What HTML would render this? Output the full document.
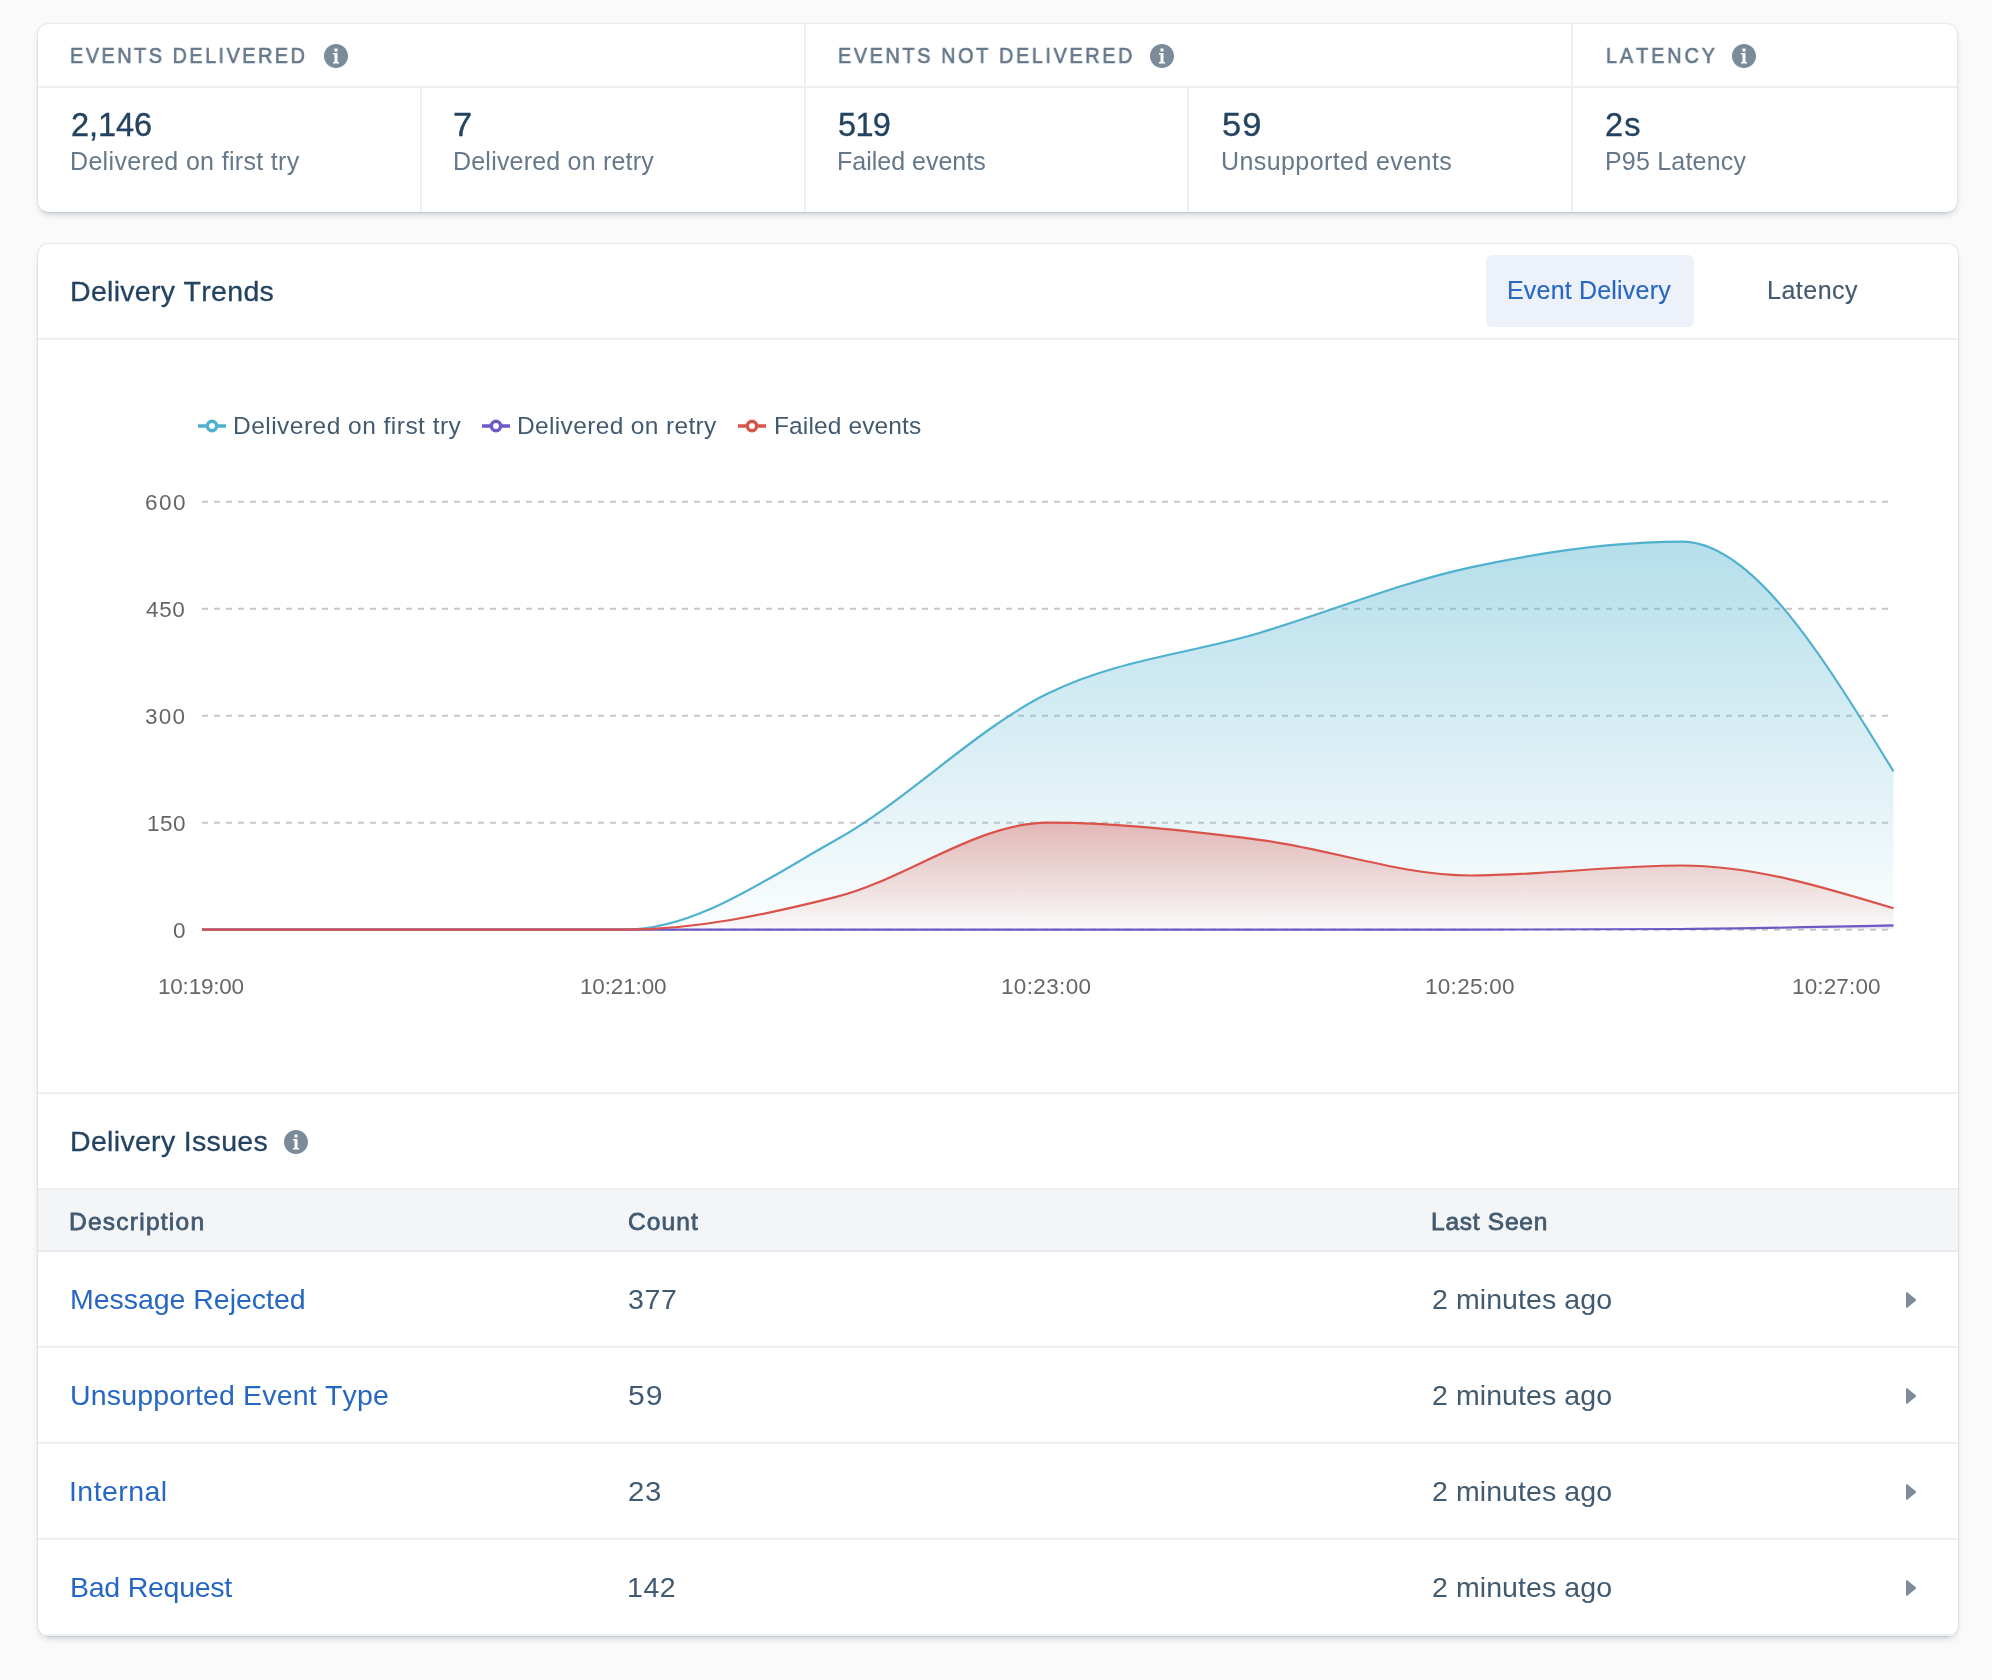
<!DOCTYPE html>
<html><head><meta charset="utf-8"><title>Delivery Overview</title>
<style>
html,body{margin:0;padding:0}
body{width:1992px;height:1680px;overflow:hidden;background:#fafafa;position:relative;font-family:"Liberation Sans",sans-serif}
.card{position:absolute;background:#fff;border-radius:10px;box-shadow:0 0 2px rgba(67,90,111,0.30),0 4px 8px -4px rgba(67,90,111,0.47)}
.hl{position:absolute;height:2px;background:#edf0f2}
.vl{position:absolute;width:2px;background:#edf0f2}
.t{position:absolute;white-space:pre;font-kerning:none;will-change:transform}
.ic{position:absolute;overflow:visible}
.chart{position:absolute;left:0;top:0}
.tabsel{position:absolute;left:1486px;top:255px;width:208px;height:72px;border-radius:6px;background:#edf1fa}
.thead{position:absolute;left:38px;top:1189px;width:1920px;height:62px;background:#f4f5f7}
</style></head><body>
<div class="card" style="left:38px;top:24px;width:1919px;height:188px"></div>
<div class="hl" style="left:38px;top:86px;width:1919px"></div>
<div class="vl" style="left:804px;top:24px;height:188px"></div>
<div class="vl" style="left:1571px;top:24px;height:188px"></div>
<div class="vl" style="left:420px;top:88px;height:124px"></div>
<div class="vl" style="left:1187px;top:88px;height:124px"></div>

<div class="card" style="left:38px;top:244px;width:1920px;height:1392px"></div>
<div class="hl" style="left:38px;top:338px;width:1920px"></div>
<div class="tabsel"></div>
<div class="hl" style="left:38px;top:1092px;width:1920px"></div>
<div class="thead"></div>
<div class="hl" style="left:38px;top:1188px;width:1920px"></div>
<div class="hl" style="left:38px;top:1250px;width:1920px;background:#e6e9ed"></div>
<div class="hl" style="left:38px;top:1346px;width:1920px"></div>
<div class="hl" style="left:38px;top:1442px;width:1920px"></div>
<div class="hl" style="left:38px;top:1538px;width:1920px"></div>
<div class="hl" style="left:42px;top:1634px;width:1912px"></div>
<svg class="chart" width="1992" height="1680" viewBox="0 0 1992 1680">
<defs>
<linearGradient id="gb" x1="0" y1="0" x2="0" y2="1"><stop offset="0" stop-color="#4fb1cf" stop-opacity="0.42"/><stop offset="1" stop-color="#4fb1cf" stop-opacity="0.02"/></linearGradient>
<linearGradient id="gr" x1="0" y1="0" x2="0" y2="1"><stop offset="0" stop-color="#d9534a" stop-opacity="0.38"/><stop offset="1" stop-color="#d9534a" stop-opacity="0.02"/></linearGradient>
<linearGradient id="gp" x1="0" y1="0" x2="0" y2="1"><stop offset="0" stop-color="#6b59c8" stop-opacity="0.3"/><stop offset="1" stop-color="#6b59c8" stop-opacity="0"/></linearGradient>
<clipPath id="cp"><rect x="200" y="480" width="1694" height="460"/></clipPath>
</defs>
<g stroke="#c8c8c8" stroke-width="2" stroke-dasharray="6 6" fill="none"><line x1="202" y1="501.7" x2="1893.5" y2="501.7"/><line x1="202" y1="608.7" x2="1893.5" y2="608.7"/><line x1="202" y1="715.7" x2="1893.5" y2="715.7"/><line x1="202" y1="822.7" x2="1893.5" y2="822.7"/><line x1="202" y1="929.7" x2="1893.5" y2="929.7"/></g>
<g clip-path="url(#cp)">
<path d="M202.00,929.70C272.48,929.70,342.96,929.70,413.44,929.70C483.92,929.70,554.40,929.70,624.88,929.70C695.35,929.70,765.83,879.17,836.31,839.82C906.79,800.47,977.27,728.06,1047.75,693.59C1118.23,659.11,1188.71,654.00,1259.19,632.95C1329.67,611.91,1400.15,582.54,1470.62,567.33C1541.10,552.11,1611.58,541.65,1682.06,541.65C1752.54,541.65,1823.02,656.49,1893.50,771.34L1893.50,929.70L202.00,929.70Z" fill="url(#gb)"/>
<path d="M202.00,929.70C272.48,929.70,342.96,929.70,413.44,929.70C483.92,929.70,554.40,929.70,624.88,929.70C695.35,929.70,765.83,879.17,836.31,839.82C906.79,800.47,977.27,728.06,1047.75,693.59C1118.23,659.11,1188.71,654.00,1259.19,632.95C1329.67,611.91,1400.15,582.54,1470.62,567.33C1541.10,552.11,1611.58,541.65,1682.06,541.65C1752.54,541.65,1823.02,656.49,1893.50,771.34" fill="none" stroke="#4fb1cf" stroke-width="2.2"/>
<path d="M202.00,929.70C272.48,929.70,342.96,929.70,413.44,929.70C483.92,929.70,554.40,929.70,624.88,929.70C695.35,929.70,765.83,929.70,836.31,929.70C906.79,929.70,977.27,929.70,1047.75,929.70C1118.23,929.70,1188.71,929.70,1259.19,929.70C1329.67,929.70,1400.15,929.70,1470.62,929.70C1541.10,929.70,1611.58,929.46,1682.06,928.99C1752.54,928.51,1823.02,926.97,1893.50,925.42L1893.50,929.70L202.00,929.70Z" fill="url(#gp)"/>
<path d="M202.00,929.70C272.48,929.70,342.96,929.70,413.44,929.70C483.92,929.70,554.40,929.70,624.88,929.70C695.35,929.70,765.83,929.70,836.31,929.70C906.79,929.70,977.27,929.70,1047.75,929.70C1118.23,929.70,1188.71,929.70,1259.19,929.70C1329.67,929.70,1400.15,929.70,1470.62,929.70C1541.10,929.70,1611.58,929.46,1682.06,928.99C1752.54,928.51,1823.02,926.97,1893.50,925.42" fill="none" stroke="#6b59c8" stroke-width="2.2"/>
<path d="M202.00,929.70C272.48,929.70,342.96,929.70,413.44,929.70C483.92,929.70,554.40,929.70,624.88,929.70C695.35,929.70,765.83,914.72,836.31,896.89C906.79,879.05,977.27,822.70,1047.75,822.70C1118.23,822.70,1188.71,831.02,1259.19,839.82C1329.67,848.62,1400.15,875.49,1470.62,875.49C1541.10,875.49,1611.58,865.50,1682.06,865.50C1752.54,865.50,1823.02,886.90,1893.50,908.30L1893.50,929.70L202.00,929.70Z" fill="url(#gr)"/>
<path d="M202.00,929.70C272.48,929.70,342.96,929.70,413.44,929.70C483.92,929.70,554.40,929.70,624.88,929.70C695.35,929.70,765.83,914.72,836.31,896.89C906.79,879.05,977.27,822.70,1047.75,822.70C1118.23,822.70,1188.71,831.02,1259.19,839.82C1329.67,848.62,1400.15,875.49,1470.62,875.49C1541.10,875.49,1611.58,865.50,1682.06,865.50C1752.54,865.50,1823.02,886.90,1893.50,908.30" fill="none" stroke="#d9534a" stroke-width="2.2"/>
</g>
</svg>
<svg class="ic" style="left:323.90px;top:43.95px" width="24" height="24" viewBox="0 0 16 16"><path fill="#7c8b9a" fill-rule="evenodd" d="M8 0C3.58 0 0 3.58 0 8s3.58 8 8 8 8-3.58 8-8-3.58-8-8-8zM7 3h2v2H7V3zm3 10H6v-1h1V7H6V6h3v6h1v1z"/></svg><svg class="ic" style="left:1150.10px;top:43.95px" width="24" height="24" viewBox="0 0 16 16"><path fill="#7c8b9a" fill-rule="evenodd" d="M8 0C3.58 0 0 3.58 0 8s3.58 8 8 8 8-3.58 8-8-3.58-8-8-8zM7 3h2v2H7V3zm3 10H6v-1h1V7H6V6h3v6h1v1z"/></svg><svg class="ic" style="left:1732.00px;top:43.95px" width="24" height="24" viewBox="0 0 16 16"><path fill="#7c8b9a" fill-rule="evenodd" d="M8 0C3.58 0 0 3.58 0 8s3.58 8 8 8 8-3.58 8-8-3.58-8-8-8zM7 3h2v2H7V3zm3 10H6v-1h1V7H6V6h3v6h1v1z"/></svg><svg class="ic" style="left:284.10px;top:1129.90px" width="24" height="24" viewBox="0 0 16 16"><path fill="#7c8b9a" fill-rule="evenodd" d="M8 0C3.58 0 0 3.58 0 8s3.58 8 8 8 8-3.58 8-8-3.58-8-8-8zM7 3h2v2H7V3zm3 10H6v-1h1V7H6V6h3v6h1v1z"/></svg><svg class="ic" style="left:198.00px;top:412.00px" width="28" height="28" viewBox="0 0 32 32"><path stroke-width="4" fill="none" stroke="#4fb1cf" d="M0,16h10.666666666666666A5.333333333333333,5.333333333333333,0,1,1,21.333333333333332,16H32M21.333333333333332,16A5.333333333333333,5.333333333333333,0,1,1,10.666666666666666,16"/></svg><svg class="ic" style="left:482.00px;top:412.00px" width="28" height="28" viewBox="0 0 32 32"><path stroke-width="4" fill="none" stroke="#6b59c8" d="M0,16h10.666666666666666A5.333333333333333,5.333333333333333,0,1,1,21.333333333333332,16H32M21.333333333333332,16A5.333333333333333,5.333333333333333,0,1,1,10.666666666666666,16"/></svg><svg class="ic" style="left:738.00px;top:412.00px" width="28" height="28" viewBox="0 0 32 32"><path stroke-width="4" fill="none" stroke="#d9534a" d="M0,16h10.666666666666666A5.333333333333333,5.333333333333333,0,1,1,21.333333333333332,16H32M21.333333333333332,16A5.333333333333333,5.333333333333333,0,1,1,10.666666666666666,16"/></svg><svg class="ic" style="left:1904px;top:1292px" width="14" height="18" viewBox="0 0 14 18"><path fill="#7c8b9a" d="M2,1.3C2,0.3 2.9,-0.1 3.6,0.5L11.5,7.1C12.2,7.6 12.2,8.4 11.5,8.9L3.6,15.5C2.9,16.1 2,15.7 2,14.7Z"/></svg><svg class="ic" style="left:1904px;top:1388px" width="14" height="18" viewBox="0 0 14 18"><path fill="#7c8b9a" d="M2,1.3C2,0.3 2.9,-0.1 3.6,0.5L11.5,7.1C12.2,7.6 12.2,8.4 11.5,8.9L3.6,15.5C2.9,16.1 2,15.7 2,14.7Z"/></svg><svg class="ic" style="left:1904px;top:1484px" width="14" height="18" viewBox="0 0 14 18"><path fill="#7c8b9a" d="M2,1.3C2,0.3 2.9,-0.1 3.6,0.5L11.5,7.1C12.2,7.6 12.2,8.4 11.5,8.9L3.6,15.5C2.9,16.1 2,15.7 2,14.7Z"/></svg><svg class="ic" style="left:1904px;top:1580px" width="14" height="18" viewBox="0 0 14 18"><path fill="#7c8b9a" d="M2,1.3C2,0.3 2.9,-0.1 3.6,0.5L11.5,7.1C12.2,7.6 12.2,8.4 11.5,8.9L3.6,15.5C2.9,16.1 2,15.7 2,14.7Z"/></svg>
<div class="t" id="h1" style="left:70.45px;top:42px;font-size:22.5px;line-height:27px;color:#66788a;letter-spacing:2.873px;-webkit-text-stroke:0.70px #66788a;transform:scaleX(0.88);transform-origin:0 0">EVENTS DELIVERED</div>
<div class="t" id="h2" style="left:838.10px;top:42px;font-size:22.5px;line-height:27px;color:#66788a;letter-spacing:3.000px;-webkit-text-stroke:0.70px #66788a;transform:scaleX(0.88);transform-origin:0 0">EVENTS NOT DELIVERED</div>
<div class="t" id="h3" style="left:1605.90px;top:42px;font-size:22.5px;line-height:27px;color:#66788a;letter-spacing:3.333px;-webkit-text-stroke:0.70px #66788a;transform:scaleX(0.88);transform-origin:0 0">LATENCY</div>
<div class="t" id="n1" style="left:71.00px;top:106px;font-size:32.5px;line-height:39px;color:#234361;letter-spacing:-0.038px;-webkit-text-stroke:0.35px #234361">2,146</div>
<div class="t" id="n2" style="left:453.20px;top:106px;font-size:32.5px;line-height:39px;color:#234361;letter-spacing:0.000px;-webkit-text-stroke:0.35px #234361;transform:scaleX(1.06);transform-origin:0 0">7</div>
<div class="t" id="n3" style="left:838.40px;top:106px;font-size:32.5px;line-height:39px;color:#234361;letter-spacing:-0.650px;-webkit-text-stroke:0.35px #234361">519</div>
<div class="t" id="n4" style="left:1222.00px;top:106px;font-size:32.5px;line-height:39px;color:#234361;letter-spacing:1.000px;-webkit-text-stroke:0.35px #234361;transform:scaleX(1.06);transform-origin:0 0">59</div>
<div class="t" id="n5" style="left:1605.40px;top:106px;font-size:32.5px;line-height:39px;color:#234361;letter-spacing:1.200px;-webkit-text-stroke:0.35px #234361">2s</div>
<div class="t" id="s1" style="left:70.00px;top:146px;font-size:25px;line-height:30px;color:#66788a;letter-spacing:0.333px">Delivered on first try</div>
<div class="t" id="s2" style="left:453.40px;top:146px;font-size:25px;line-height:30px;color:#66788a;letter-spacing:0.206px">Delivered on retry</div>
<div class="t" id="s3" style="left:836.60px;top:146px;font-size:25px;line-height:30px;color:#66788a;letter-spacing:-0.000px">Failed events</div>
<div class="t" id="s4" style="left:1220.60px;top:146px;font-size:25px;line-height:30px;color:#66788a;letter-spacing:0.412px">Unsupported events</div>
<div class="t" id="s5" style="left:1604.60px;top:146px;font-size:25px;line-height:30px;color:#66788a;letter-spacing:0.200px">P95 Latency</div>
<div class="t" id="dt" style="left:69.60px;top:274px;font-size:28.5px;line-height:35px;color:#234361;letter-spacing:0.304px;-webkit-text-stroke:0.30px #234361">Delivery Trends</div>
<div class="t" id="tab1" style="left:1507.20px;top:275px;font-size:25px;line-height:30px;color:#2767c4;letter-spacing:0.192px;-webkit-text-stroke:0.15px #2767c4">Event Delivery</div>
<div class="t" id="tab2" style="left:1767.00px;top:275px;font-size:25px;line-height:30px;color:#425a70;letter-spacing:0.500px;-webkit-text-stroke:0.15px #425a70">Latency</div>
<div class="t" id="lg1" style="left:233.20px;top:411px;font-size:24.5px;line-height:30px;color:#425a70;letter-spacing:0.476px">Delivered on first try</div>
<div class="t" id="lg2" style="left:517.20px;top:411px;font-size:24.5px;line-height:30px;color:#425a70;letter-spacing:0.353px">Delivered on retry</div>
<div class="t" id="lg3" style="left:774.00px;top:411px;font-size:24.5px;line-height:30px;color:#425a70;letter-spacing:0.125px">Failed events</div>
<div class="t" id="y600" style="left:145.00px;top:489px;font-size:22.5px;line-height:27px;color:#666666;letter-spacing:1.500px">600</div>
<div class="t" id="y450" style="left:146.00px;top:596px;font-size:22.5px;line-height:27px;color:#666666;letter-spacing:0.625px">450</div>
<div class="t" id="y300" style="left:144.60px;top:703px;font-size:22.5px;line-height:27px;color:#666666;letter-spacing:1.250px">300</div>
<div class="t" id="y150" style="left:147.20px;top:810px;font-size:22.5px;line-height:27px;color:#666666;letter-spacing:0.500px">150</div>
<div class="t" id="y0" style="left:172.60px;top:917px;font-size:22.5px;line-height:27px;color:#666666;letter-spacing:0.000px">0</div>
<div class="t" id="x0" style="left:157.80px;top:973px;font-size:22.5px;line-height:27px;color:#666666;letter-spacing:-0.214px">10:19:00</div>
<div class="t" id="x1" style="left:580.20px;top:973px;font-size:22.5px;line-height:27px;color:#666666;letter-spacing:-0.143px">10:21:00</div>
<div class="t" id="x2" style="left:1001.20px;top:973px;font-size:22.5px;line-height:27px;color:#666666;letter-spacing:0.357px">10:23:00</div>
<div class="t" id="x3" style="left:1424.60px;top:973px;font-size:22.5px;line-height:27px;color:#666666;letter-spacing:0.286px">10:25:00</div>
<div class="t" id="x4" style="left:1792.40px;top:973px;font-size:22.5px;line-height:27px;color:#666666;letter-spacing:0.143px">10:27:00</div>
<div class="t" id="di" style="left:70.00px;top:1124px;font-size:28.5px;line-height:35px;color:#234361;letter-spacing:0.321px;-webkit-text-stroke:0.30px #234361">Delivery Issues</div>
<div class="t" id="th1" style="left:69.40px;top:1207px;font-size:24.5px;line-height:30px;color:#425a70;letter-spacing:1.250px;-webkit-text-stroke:0.80px #425a70">Description</div>
<div class="t" id="th2" style="left:628.00px;top:1207px;font-size:24.5px;line-height:30px;color:#425a70;letter-spacing:1.125px;-webkit-text-stroke:0.80px #425a70">Count</div>
<div class="t" id="th3" style="left:1431.00px;top:1207px;font-size:24.5px;line-height:30px;color:#425a70;letter-spacing:0.750px;-webkit-text-stroke:0.80px #425a70">Last Seen</div>
<div class="t" id="r0d" style="left:70.00px;top:1282px;font-size:28.5px;line-height:35px;color:#2767c4;letter-spacing:-0.033px">Message Rejected</div>
<div class="t" id="r0c" style="left:628.00px;top:1282px;font-size:28.5px;line-height:35px;color:#425a70;letter-spacing:0.650px">377</div>
<div class="t" id="r0l" style="left:1432.20px;top:1282px;font-size:28.5px;line-height:35px;color:#425a70;letter-spacing:0.083px">2 minutes ago</div>
<div class="t" id="r1d" style="left:70.00px;top:1378px;font-size:28.5px;line-height:35px;color:#2767c4;letter-spacing:0.167px">Unsupported Event Type</div>
<div class="t" id="r1c" style="left:628.00px;top:1378px;font-size:28.5px;line-height:35px;color:#425a70;letter-spacing:0.800px;transform:scaleX(1.06);transform-origin:0 0">59</div>
<div class="t" id="r1l" style="left:1432.20px;top:1378px;font-size:28.5px;line-height:35px;color:#425a70;letter-spacing:0.083px">2 minutes ago</div>
<div class="t" id="r2d" style="left:69.00px;top:1474px;font-size:28.5px;line-height:35px;color:#2767c4;letter-spacing:0.429px">Internal</div>
<div class="t" id="r2c" style="left:628.00px;top:1474px;font-size:28.5px;line-height:35px;color:#425a70;letter-spacing:0.600px;transform:scaleX(1.03);transform-origin:0 0">23</div>
<div class="t" id="r2l" style="left:1432.20px;top:1474px;font-size:28.5px;line-height:35px;color:#425a70;letter-spacing:0.083px">2 minutes ago</div>
<div class="t" id="r3d" style="left:70.00px;top:1570px;font-size:28.5px;line-height:35px;color:#2767c4;letter-spacing:-0.250px">Bad Request</div>
<div class="t" id="r3c" style="left:627.00px;top:1570px;font-size:28.5px;line-height:35px;color:#425a70;letter-spacing:0.550px">142</div>
<div class="t" id="r3l" style="left:1432.20px;top:1570px;font-size:28.5px;line-height:35px;color:#425a70;letter-spacing:0.083px">2 minutes ago</div>
</body></html>
